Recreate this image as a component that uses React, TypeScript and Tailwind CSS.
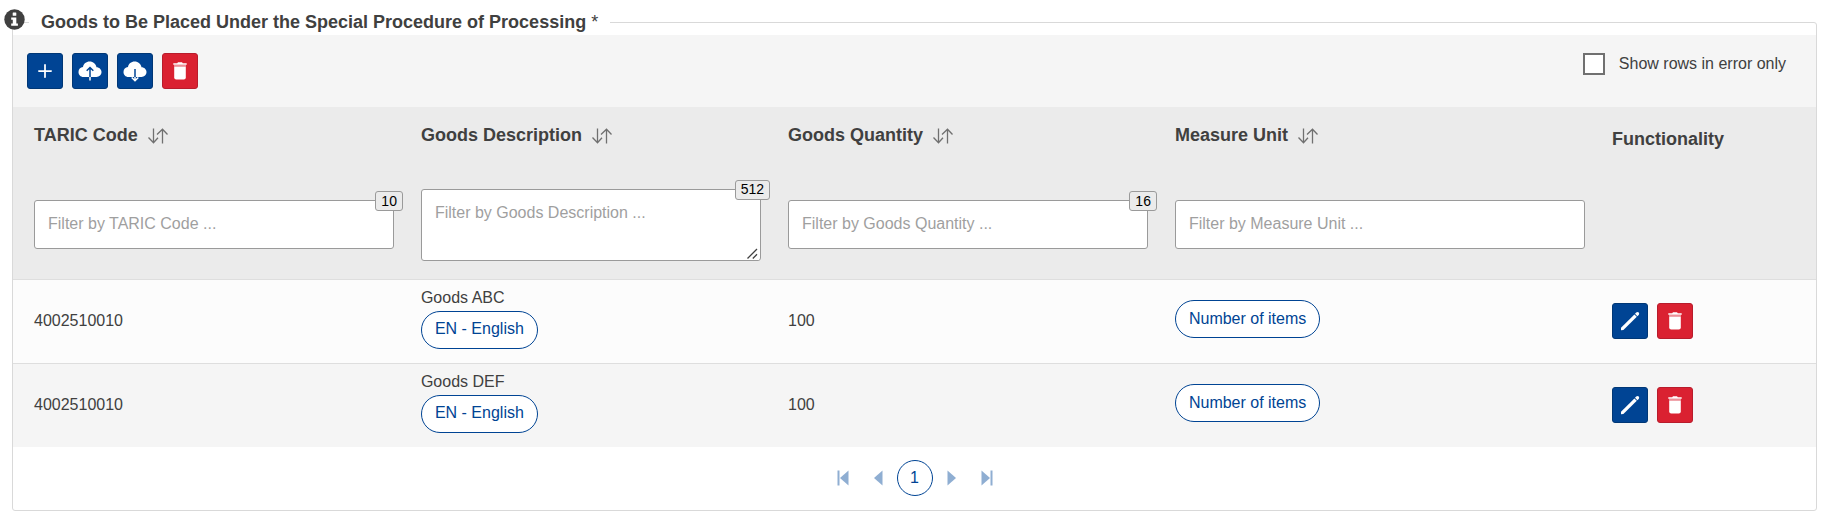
import { useState } from 'react';
import type { ReactNode } from 'react';
import { IoIosAdd } from 'react-icons/io';

type GoodsRow = { id: number; code: string; description: string; language: string; quantity: number; unit: string };

const ROWS: GoodsRow[] = [
  { id: 1, code: '4002510010', description: 'Goods ABC', language: 'EN - English', quantity: 100, unit: 'Number of items' },
  { id: 2, code: '4002510010', description: 'Goods DEF', language: 'EN - English', quantity: 100, unit: 'Number of items' },
];

const COLUMNS: { title: string; limit?: number; multiline?: boolean }[] = [
  { title: 'TARIC Code', limit: 10 },
  { title: 'Goods Description', limit: 512, multiline: true },
  { title: 'Goods Quantity', limit: 16 },
  { title: 'Measure Unit' },
];

function InfoIcon() {
  return (
    <svg viewBox="0 0 21 21" role="img" aria-label="Information" className="absolute -top-[25px] -left-[9px] size-[21px]">
      <circle cx="10.5" cy="10.5" r="10.2" fill="#404040" />
      <rect x="8.7" y="3.6" width="3.6" height="3.2" rx="0.5" fill="#fff" />
      <path d="M7.2 8.4H12.3V14.4H13.9V16.8H7.2V14.4H8.8V10.8H7.2Z" fill="#fff" />
    </svg>
  );
}

function SortIcon() {
  return (
    <svg viewBox="0 0 20 16" className="h-4 w-5" fill="none" stroke="currentColor" strokeWidth="1.3">
      <path d="M5.5 0.5V15M0.5 9.5L5.5 14.8L10 9.8" />
      <path d="M14.5 15.5V1M9 6.5L14.5 1.2L19.5 6.5" />
    </svg>
  );
}

const CLOUD =
  'M5.5 18C2.5 18 0.5 15.7 0.5 13C0.5 10.3 2.4 8.3 5 8C5.5 4.8 8.2 2.5 11.6 2.5C15.2 2.5 18 5 18.5 8.3C21.3 8.3 23.5 10.5 23.5 13.1C23.5 15.8 21.3 18 18.5 18Z';

function CloudUploadIcon() {
  return (
    <svg viewBox="0 0 24 24" className="size-6" fill="none" strokeWidth="1.5">
      <path d={CLOUD} fill="currentColor" />
      <path d="M12 18V8.5M8.7 11.8L12 8.5L15.3 11.8" stroke="#004494" />
      <path d="M12 18V21.5" stroke="currentColor" />
    </svg>
  );
}

function CloudDownloadIcon() {
  return (
    <svg viewBox="0 0 24 24" className="size-6" fill="none" strokeWidth="1.5">
      <path d={CLOUD} fill="currentColor" />
      <path d="M12 10V18" stroke="#004494" />
      <path d="M12 18V21.5M8.7 18.5L12 21.8L15.3 18.5" stroke="currentColor" />
    </svg>
  );
}

function TrashIcon() {
  return (
    <svg viewBox="0 0 20 20" className="size-5" fill="currentColor">
      <path d="M3.3 2.3H7.2L8 1.3H12L12.8 2.3H16.7V3.8H3.3Z" />
      <path d="M4 3.8H16V5.4H4Z" opacity="0.5" />
      <path d="M4.2 5.4H15.8V16.5Q15.8 18.5 13.8 18.5H6.2Q4.2 18.5 4.2 16.5Z" />
    </svg>
  );
}

function PencilIcon() {
  return (
    <svg viewBox="0 0 20 20" className="size-5" fill="currentColor">
      <path d="M1 16.8L14.4 3.4L16.8 5.8L3.4 19L1 19.2Z" />
      <path d="M15 2.8L16.2 1.6Q17.6 0.6 18.8 1.5Q19.7 2.8 18.7 4L17.4 5.2Z" />
    </svg>
  );
}

function PagerIcon({ bar, flip }: { bar?: boolean; flip?: boolean }) {
  return (
    <svg viewBox="0 0 12 16" className={flip ? 'h-4 w-3 rotate-180' : 'h-4 w-3'} fill="currentColor">
      {bar && <rect x="0.5" y="0.5" width="2" height="15" />}
      <path d={bar ? 'M11.5 0.5V15.5L3 8Z' : 'M9.5 0.5V15.5L1 8Z'} />
    </svg>
  );
}

function IconButton({ label, danger, children }: { label: string; danger?: boolean; children: ReactNode }) {
  return (
    <button
      type="button"
      aria-label={label}
      className={
        danger
          ? 'flex size-9 items-center justify-center rounded-[3px] border border-[#b81c2c] bg-[#da2131] text-white'
          : 'flex size-9 items-center justify-center rounded-[3px] border border-[#003776] bg-[#004494] text-white'
      }
    >
      {children}
    </button>
  );
}

function Chip({ children }: { children: ReactNode }) {
  return (
    <span className="inline-flex h-[38px] items-center rounded-full border border-[#004494] bg-white px-[13px] pb-px text-[#004494]">
      {children}
    </span>
  );
}

function Filter({ title, limit, multiline }: { title: string; limit?: number; multiline?: boolean }) {
  const placeholder = `Filter by ${title} ...`;
  return (
    <div className="relative">
      {multiline ? (
        <>
          <textarea
            aria-label={placeholder}
            placeholder={placeholder}
            className="block h-[72px] w-full rounded-[3px] border border-[#9a9a9a] bg-white px-[13px] py-[11px] leading-6 font-normal placeholder:text-[#9f9f9f]"
          />
          <svg viewBox="0 0 12 12" className="pointer-events-none absolute right-[2px] bottom-px size-3" fill="none" stroke="#404040" strokeWidth="1.3">
            <rect width="12" height="12" fill="#fff" stroke="none" />
            <path d="M0.5 10.5L10 1M5.8 10.5L10 6.3" />
          </svg>
        </>
      ) : (
        <input
          type="text"
          aria-label={placeholder}
          placeholder={placeholder}
          className="block h-[49px] w-full rounded-[3px] border border-[#9a9a9a] bg-white px-[13px] pb-px font-normal placeholder:text-[#9f9f9f]"
        />
      )}
      {limit !== undefined && (
        <span className="absolute -top-[9px] -right-[9px] flex h-5 items-center rounded-[3px] border border-[#9a9a9a] bg-[#ebebeb] px-[5px] pb-px text-sm font-normal text-black">
          {limit}
        </span>
      )}
    </div>
  );
}

export default function App() {
  const [errorsOnly, setErrorsOnly] = useState(false);
  return (
    <main className="bg-white pt-[10px] pr-2 pb-[6px] pl-3 font-['Liberation_Sans',Arial,sans-serif] text-base text-[#404040]">
      <fieldset className="relative min-w-0 rounded-[3px] border border-[#d9d9d9] pt-px">
        <legend className="ml-4 px-3 text-lg leading-6 font-bold">
          Goods to Be Placed Under the Special Procedure of Processing <span className="font-normal">*</span>
        </legend>
        <InfoIcon />

        <div className="flex items-start justify-between bg-[#f5f5f5] pt-[18px] pr-[30px] pb-[18px] pl-[14px]">
          <div className="flex gap-[9px]">
            <IconButton label="Add row"><IoIosAdd className="size-7" /></IconButton>
            <IconButton label="Upload"><CloudUploadIcon /></IconButton>
            <IconButton label="Download"><CloudDownloadIcon /></IconButton>
            <IconButton label="Delete rows" danger><TrashIcon /></IconButton>
          </div>
          <label className="flex items-center gap-[14px] leading-[22px]">
            <input
              type="checkbox"
              checked={errorsOnly}
              onChange={(e) => setErrorsOnly(e.target.checked)}
              className="size-[22px] appearance-none border-2 border-[#707070] bg-white checked:bg-[#004494]"
            />
            Show rows in error only
          </label>
        </div>

        <table className="w-full table-fixed border-collapse text-left">
          <colgroup>
            <col className="w-[21.46%]" />
            <col className="w-[20.36%]" />
            <col className="w-[21.46%]" />
            <col className="w-[24.24%]" />
            <col className="w-[12.48%]" />
          </colgroup>
          <thead className="bg-[#ebebeb]">
            <tr className="h-16 align-top text-lg leading-6">
              {COLUMNS.map((c) => (
                <th key={c.title} scope="col" className="pt-4 pl-[21px] font-bold">
                  <span className="flex items-center gap-[10px]">
                    {c.title}
                    <button type="button" aria-label={`Sort by ${c.title}`} className="pt-px text-[#707070]">
                      <SortIcon />
                    </button>
                  </span>
                </th>
              ))}
              <th scope="col" className="pt-5 pl-[21px] font-bold">Functionality</th>
            </tr>
            <tr className="h-[108px]">
              {COLUMNS.map((c) => (
                <td key={c.title} className="pr-[6px] pl-[21px] align-middle">
                  <Filter {...c} />
                </td>
              ))}
              <td />
            </tr>
          </thead>
          <tbody>
            {ROWS.map((r) => (
              <tr key={r.id} className="h-[84px] border-t border-[#dedede] odd:bg-[#fcfcfc] even:bg-[#f5f5f5]">
                <td className="pl-[21px]">{r.code}</td>
                <td className="pl-[21px] align-top">
                  <div className="flex flex-col items-start gap-px pt-[6px]">
                    {r.description}
                    <Chip>{r.language}</Chip>
                  </div>
                </td>
                <td className="pl-[21px]">{r.quantity}</td>
                <td className="pb-1 pl-[21px]">
                  <div className="flex"><Chip>{r.unit}</Chip></div>
                </td>
                <td className="pl-[21px]">
                  <div className="flex gap-[9px]">
                    <IconButton label={`Edit ${r.description}`}><PencilIcon /></IconButton>
                    <IconButton label={`Delete ${r.description}`} danger><TrashIcon /></IconButton>
                  </div>
                </td>
              </tr>
            ))}
          </tbody>
        </table>

        <nav aria-label="Pagination" className="flex justify-center pt-[13px] pb-[14px] text-[#8faed2]">
          <button type="button" aria-label="First page" className="flex size-9 items-center justify-center"><PagerIcon bar /></button>
          <button type="button" aria-label="Previous page" className="flex size-9 items-center justify-center"><PagerIcon /></button>
          <button type="button" aria-current="page" className="size-9 rounded-full border border-[#004494] pb-px text-[#004494]">1</button>
          <button type="button" aria-label="Next page" className="flex size-9 items-center justify-center"><PagerIcon flip /></button>
          <button type="button" aria-label="Last page" className="flex size-9 items-center justify-center"><PagerIcon bar flip /></button>
        </nav>
      </fieldset>
    </main>
  );
}
